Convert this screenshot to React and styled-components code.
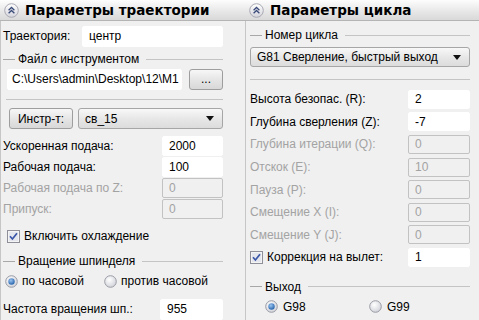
import React from 'react';
import styled, { createGlobalStyle } from 'styled-components';

const Global = createGlobalStyle`
  html, body { margin: 0; padding: 0; background: #f0f0f0; }
  body { font-family: "Liberation Sans", Arial, sans-serif; font-size: 12px; color: #000; }
  * { box-sizing: border-box; }
`;

const Page = styled.div`
  width: 479px;
  height: 320px;
  overflow: hidden;
  display: grid;
  grid-template-columns: 245px 1fr;
  background: #f0f0f0;
`;

const Panel = styled.section`
  display: flex;
  flex-direction: column;
  min-width: 0;
`;

const Header = styled.div`
  height: 21px;
  display: flex;
  align-items: center;
  gap: 6px;
  padding-left: ${p => p.$pad}px;
  background: linear-gradient(#fdfdfd, #e6e6e6 60%, #d9d9d9);
  border-bottom: 1px solid #b4b4b4;
  font-family: "DejaVu Sans", sans-serif;
  font-weight: bold;
  font-size: 13.5px;
  white-space: nowrap;
`;

const Body = styled.div`
  flex: 1;
  border-left: 1px solid #c6c6c6;
  display: flex;
  flex-direction: column;
  padding: ${p => p.$pad};
`;

const Row = styled.div`
  display: flex;
  align-items: center;
  gap: ${p => p.$gap || 0}px;
  height: ${p => p.$h}px;
  margin-top: ${p => p.$mt || 0}px;
  padding-left: ${p => p.$pl || 0}px;
`;

const Label = styled.span`
  flex: 1;
  white-space: nowrap;
  color: ${p => (p.$disabled ? '#a3a3a3' : '#000')};
`;

const TextBox = styled.div`
  width: ${p => p.$w}px;
  height: ${p => p.$h || 20}px;
  flex: ${p => (p.$grow ? 1 : 'none')};
  min-width: 0;
  display: flex;
  align-items: center;
  padding-left: ${p => p.$pad ?? 6}px;
  white-space: nowrap;
  overflow: hidden;
  background: ${p => (p.$disabled ? '#f0f0f0' : '#fff')};
  border: 1px solid ${p => (p.$disabled ? '#c2c2c2' : '#fff')};
  border-radius: 2px;
  color: ${p => (p.$disabled ? '#a3a3a3' : '#000')};
`;

const GroupTitle = styled.div`
  display: flex;
  align-items: center;
  height: ${p => p.$h}px;
  margin-top: ${p => p.$mt || 0}px;
  gap: 3px;
  &::before {
    content: '';
    width: 12px;
    border-top: 1px solid #a8a8a8;
  }
  &::after {
    content: '';
    flex: 1;
    border-top: 1px solid #c4c4c4;
    margin-left: 4px;
  }
`;

const Separator = styled.div`
  border-top: 1px solid #c4c4c4;
  margin: ${p => p.$m};
`;

const Button = styled.div`
  width: ${p => p.$w}px;
  height: ${p => p.$h}px;
  display: flex;
  align-items: center;
  justify-content: center;
  border: 1px solid #9e9e9e;
  border-radius: 3px;
  background: linear-gradient(#f7f7f7, #e4e4e4 55%, #d8d8d8);
  white-space: nowrap;
`;

const Combo = styled.div`
  flex: 1;
  height: ${p => p.$h}px;
  display: flex;
  align-items: center;
  padding: 0 8px 0 6px;
  border: 1px solid #a6a6a6;
  border-radius: 3px;
  background: linear-gradient(#f8f8f8, #e6e6e6 55%, #dcdcdc);
  white-space: nowrap;
  span { flex: 1; }
`;

const Arrow = styled.i`
  width: 0;
  height: 0;
  border-left: 4px solid transparent;
  border-right: 4px solid transparent;
  border-top: 5px solid #111;
`;

const Radios = styled.div`
  display: grid;
  grid-template-columns: ${p => p.$cols};
  align-items: center;
  height: ${p => p.$h}px;
  margin-top: ${p => p.$mt || 0}px;
  padding-left: ${p => p.$pl || 0}px;
`;

const Choice = styled.label`
  display: flex;
  align-items: center;
  gap: ${p => p.$gap || 4}px;
  white-space: nowrap;
`;

const CollapseIcon = () => (
  <svg width="15" height="15" viewBox="0 0 15 15">
    <defs>
      <linearGradient id="cg" x1="0" y1="0" x2="0" y2="1">
        <stop offset="0" stopColor="#ffffff" />
        <stop offset="1" stopColor="#d4d4dc" />
      </linearGradient>
    </defs>
    <circle cx="7.5" cy="7.5" r="6.8" fill="url(#cg)" stroke="#a9a9b4" strokeWidth="1" />
    <path d="M4.6 7.2 L7.5 4.5 L10.4 7.2 M4.6 10.2 L7.5 7.5 L10.4 10.2" fill="none" stroke="#3a4a78" strokeWidth="1.3" />
  </svg>
);

const CheckIcon = () => (
  <svg width="13" height="13" viewBox="0 0 13 13">
    <rect x="0.5" y="0.5" width="12" height="12" fill="#f4f4f4" stroke="#8e8f99" />
    <rect x="2" y="2" width="9" height="9" fill="#e4e6ee" />
    <path d="M3 6.3 L5.4 9 L10 3.2" fill="none" stroke="#3a56a8" strokeWidth="1.7" />
  </svg>
);

const RadioIcon = ({ on }) => (
  <svg width="13" height="13" viewBox="0 0 13 13">
    <defs>
      <radialGradient id="rg" cx="0.4" cy="0.35" r="0.7">
        <stop offset="0" stopColor="#ffffff" />
        <stop offset="1" stopColor="#cfd1d8" />
      </radialGradient>
      <radialGradient id="rd" cx="0.4" cy="0.35" r="0.7">
        <stop offset="0" stopColor="#9cc4f0" />
        <stop offset="1" stopColor="#1f5fa8" />
      </radialGradient>
    </defs>
    <circle cx="6.5" cy="6.5" r="5.8" fill="url(#rg)" stroke="#9a9ca6" />
    {on && <circle cx="6.5" cy="6.5" r="3.2" fill="url(#rd)" />}
  </svg>
);

const Field = ({ label, value, disabled, w = 61, h = 20, rh = 22.6, mt }) => (
  <Row $h={rh} $mt={mt}>
    <Label $disabled={disabled}>{label}</Label>
    <TextBox $w={w} $h={h} $disabled={disabled}>{value}</TextBox>
  </Row>
);

export default function App() {
  return (
    <>
      <Global />
      <Page>
        <Panel>
          <Header $pad={4}><CollapseIcon />Параметры траектории</Header>
          <Body $pad="0 22px 0 2px">
            <Row $h={22} $mt={4}>
              <Label>Траектория:</Label>
              <TextBox $w={141} $h={21}>центр</TextBox>
            </Row>
            <GroupTitle $h={16} $mt={4}>Файл с инструментом</GroupTitle>
            <Row $h={22} $mt={1} $gap={7} $pl={4}>
              <TextBox $grow $h={21} $pad={4}>C:\Users\admin\Desktop\12\M1</TextBox>
              <Button $w={34} $h={21}>...</Button>
            </Row>
            <Separator $m="9px 0 8px 3px" />
            <Row $h={21} $gap={5} $pl={6}>
              <Button $w={64} $h={21}>Инстр-т:</Button>
              <Combo $h={21}><span>св_15</span><Arrow /></Combo>
            </Row>
            <Field label="Ускоренная подача:" value="2000" w={61} mt={6} rh={21} />
            <Field label="Рабочая подача:" value="100" w={61} rh={21} />
            <Field label="Рабочая подача по Z:" value="0" disabled w={61} rh={21} />
            <Field label="Припуск:" value="0" disabled w={61} rh={22} />
            <Row $h={26} $mt={3} $gap={4} $pl={4}>
              <CheckIcon />
              <span>Включить охлаждение</span>
            </Row>
            <GroupTitle $h={16} $mt={4}>Вращение шпинделя</GroupTitle>
            <Radios $h={22} $mt={1} $cols="99px 1fr" $pl={2}>
              <Choice><RadioIcon on />по часовой</Choice>
              <Choice><RadioIcon />против часовой</Choice>
            </Radios>
            <Row $h={22} $mt={6}>
              <Label>Частота вращения шп.:</Label>
              <TextBox $w={63} $h={21}>955</TextBox>
            </Row>
          </Body>
        </Panel>
        <Panel>
          <Header $pad={4}><CollapseIcon />Параметры цикла</Header>
          <Body $pad="0 9px 0 4px">
            <GroupTitle $h={16} $mt={6}>Номер цикла</GroupTitle>
            <Row $h={20} $mt={4}>
              <Combo $h={20}><span>G81 Сверление, быстрый выход</span><Arrow /></Combo>
            </Row>
            <Separator $m="12px 0 8px 0" />
            <Field label="Высота безопас. (R):" value="2" w={62} h={19} />
            <Field label="Глубина сверления (Z):" value="-7" w={62} h={19} />
            <Field label="Глубина итерации (Q):" value="0" disabled w={62} h={19} />
            <Field label="Отскок (E):" value="10" disabled w={62} h={19} />
            <Field label="Пауза (P):" value="0" disabled w={62} h={19} />
            <Field label="Смещение X (I):" value="0" disabled w={62} h={19} />
            <Field label="Смещение Y (J):" value="0" disabled w={62} h={19} />
            <Row $h={22.6} $gap={4}>
              <CheckIcon />
              <Label>Коррекция на вылет:</Label>
              <TextBox $w={62} $h={19}>1</TextBox>
            </Row>
            <GroupTitle $h={16} $mt={10}>Выход</GroupTitle>
            <Radios $h={24} $cols="104px 1fr" $pl={15}>
              <Choice $gap={5}><RadioIcon on />G98</Choice>
              <Choice $gap={5}><RadioIcon />G99</Choice>
            </Radios>
          </Body>
        </Panel>
      </Page>
    </>
  );
}
